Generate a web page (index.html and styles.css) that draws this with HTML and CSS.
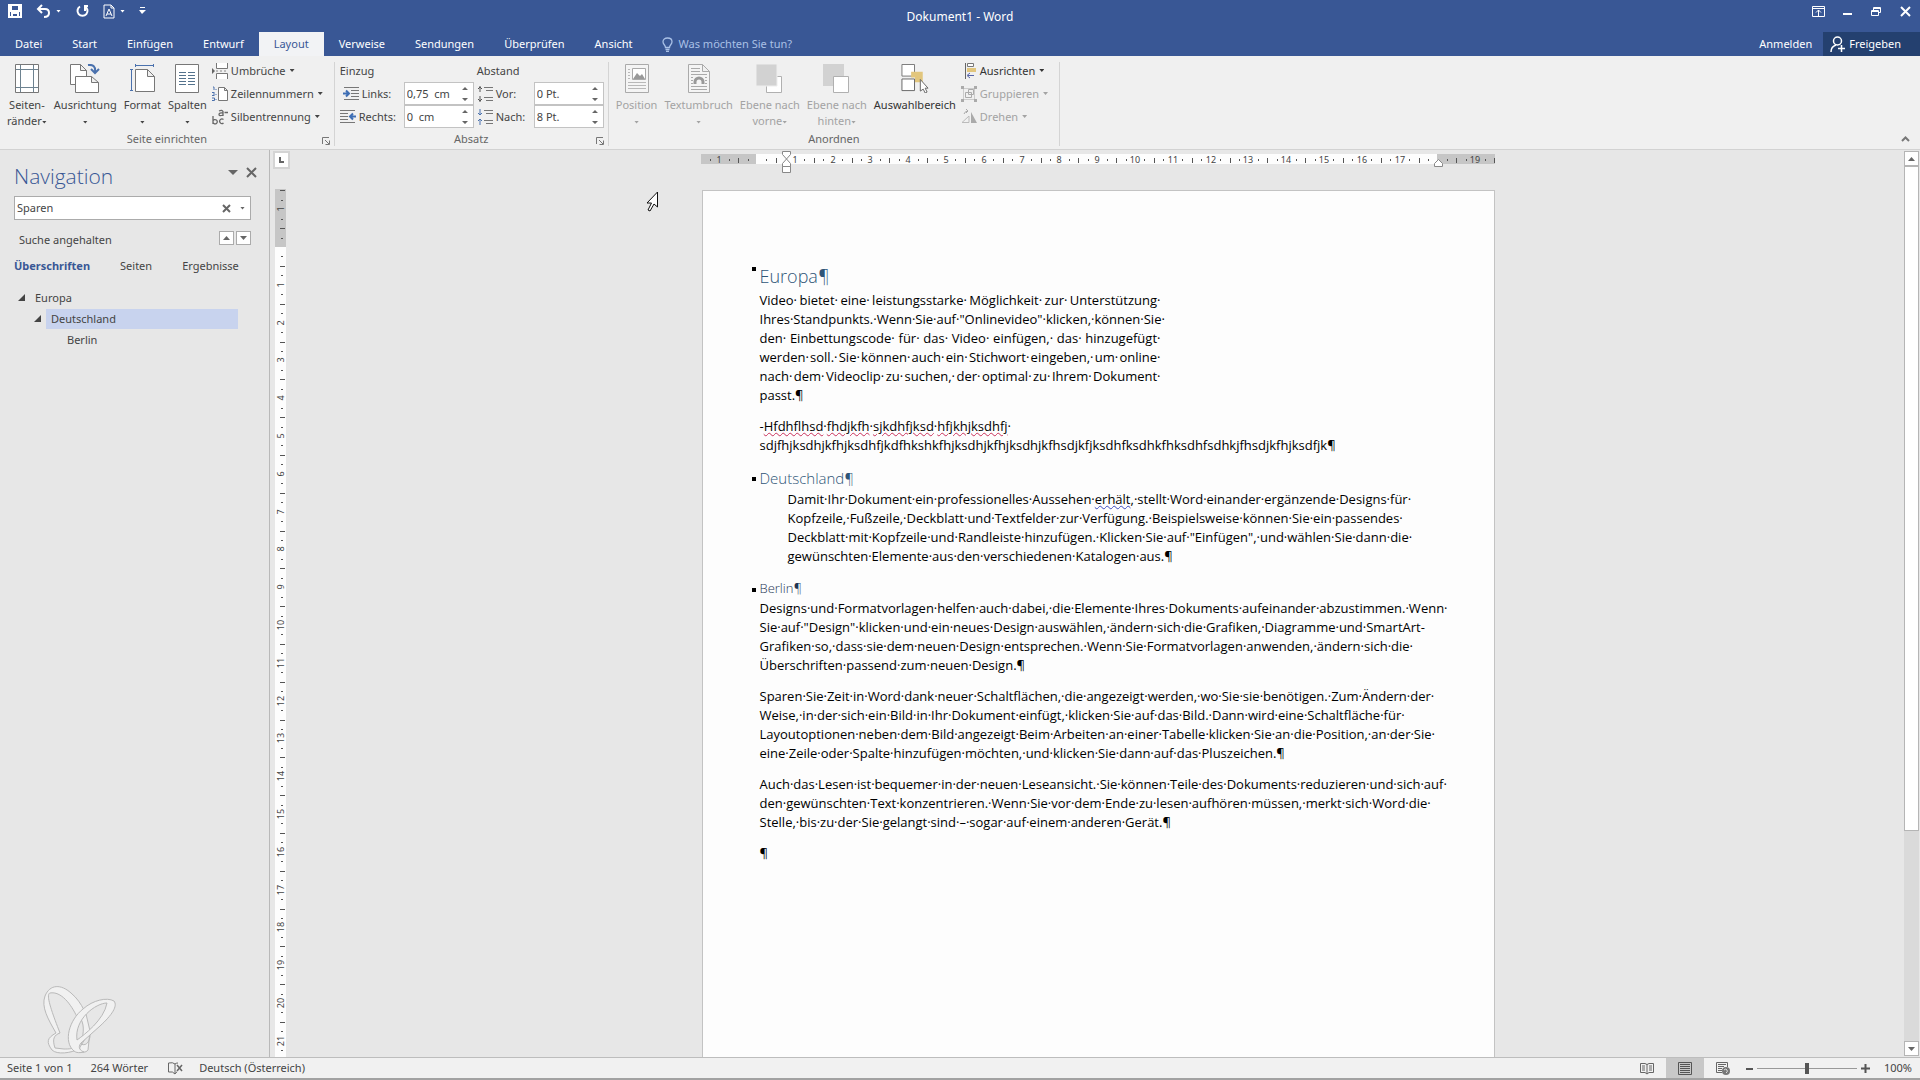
FILE: index.html
```html
<!DOCTYPE html>
<html lang="de">
<head>
<meta charset="utf-8">
<title>Dokument1 - Word</title>
<link rel="stylesheet" href="styles.css">
</head>
<body>
<header class="titlebar">
  <div class="title-row">
    <div class="quick">
      <button class="icon-btn" aria-label="Speichern"><svg width="14" height="14" viewBox="0 0 14 14"><path d="M1 1h12v12H1zM3 1v6h8V1M4 13V9h6v4" fill="none" stroke="#fff" stroke-width="2"/></svg></button>
      <button class="icon-btn undo" aria-label="Rückgängig"><svg width="15" height="14" viewBox="0 0 15 14"><path d="M6 1L2 5l4 4M2 5h7q4 0 4 4t-5 4" fill="none" stroke="#fff" stroke-width="2"/></svg><i class="caret"></i></button>
      <button class="icon-btn" aria-label="Wiederholen"><svg width="14" height="14" viewBox="0 0 14 14"><path d="M5 2.500a5 5 0 1 0 5 0M10 7V2" fill="none" stroke="#fff" stroke-width="2"/><path d="M9 1h4v2H9z" fill="#fff"/></svg></button>
      <button class="icon-btn doc" aria-label="Formatvorlage"><svg width="12" height="15" viewBox="0 0 12 15"><path d="M1 1h7l3 3v10H1zM8 1v3h3M3 12l3-7 3 7M4 10h4" fill="none" stroke="#fff"/></svg><i class="caret"></i></button>
      <button class="icon-btn" aria-label="Symbolleiste anpassen"><svg width="7" height="8" viewBox="0 0 7 8"><path d="M1 0h5v1H1zM0 3h7L3 7z" fill="#fff"/></svg></button>
    </div>
    <h1 class="doc-title">Dokument1 - Word</h1>
    <div class="window-btns">
      <button class="icon-btn" aria-label="Menüband-Anzeigeoptionen"><svg width="13" height="11" viewBox="0 0 13 11"><path d="M.5.5h12v10H.5zM1 2.500h11M6.500 10V4M4 6.500L6.500 4 9 6.500" fill="none" stroke="#fff"/></svg></button>
      <button class="icon-btn" aria-label="Minimieren"><svg width="10" height="11" viewBox="0 0 10 11"><path d="M0 7h9v2H0z" fill="#fff"/></svg></button>
      <button class="icon-btn" aria-label="Wiederherstellen"><svg width="11" height="11" viewBox="0 0 11 11"><path d="M.5 4.500h7v5h-7zM.5 5.500h7M2.500 4V1.500h7v5H8M2.500 2.500h7" fill="none" stroke="#fff"/></svg></button>
      <button class="icon-btn" aria-label="Schließen"><svg width="11" height="11" viewBox="0 0 11 11"><path d="M1 1l9 9M10 1l-9 9" stroke="#fff" stroke-width="2"/></svg></button>
    </div>
  </div>
  <nav class="tabs">
    <button class="tab file">Datei</button>
    <button class="tab">Start</button>
    <button class="tab">Einfügen</button>
    <button class="tab">Entwurf</button>
    <button class="tab active">Layout</button>
    <button class="tab">Verweise</button>
    <button class="tab">Sendungen</button>
    <button class="tab">Überprüfen</button>
    <button class="tab">Ansicht</button>
    <button class="tell"><svg width="11" height="15" viewBox="0 0 11 15"><path d="M3.500 10.500C3.500 8 1 7.500 1 4.800 1 2.500 3 1 5.500 1S10 2.500 10 4.800C10 7.500 7.500 8 7.500 10.500zM3.500 12.500h4M4 14.300h3" fill="none" stroke="#a9c0e6" stroke-width="1.300"/></svg>Was möchten Sie tun?</button>
    <button class="signin">Anmelden</button>
    <button class="share"><svg width="15" height="16" viewBox="0 0 15 16"><circle cx="7.500" cy="5" r="4" fill="none" stroke="#fff" stroke-width="1.500"/><path d="M1 16c0-4 2-6 5-7M11.500 9v7M8 12.500h7" fill="none" stroke="#fff" stroke-width="1.500"/></svg>Freigeben</button>
  </nav>
</header>

<section class="ribbon">
  <div class="group">
    <div class="tools">
      <button class="big"><svg width="24" height="29" viewBox="0 0 24 29"><path d="M.5.500h23v28H.5z" fill="#fff" stroke="#777"/><path d="M5.500 1v27M18.500 1v27M1 5.500h22M1 23.500h22" stroke="#6d8290"/></svg><span>Seiten-<br>ränder<i class="caret"></i></span></button>
      <button class="big"><svg width="30" height="29" viewBox="0 0 30 29"><path d="M.5.500h10l6 6v14H.5zM10.500.5v6h6" fill="#fff" stroke="#777"/><path d="M5.500 12.500h16l7 6v10h-23zM21.500 12.500v6h7" fill="#fff" stroke="#777"/><path d="M18 1q8-1 7 7M21 5l4 4 4-4" fill="none" stroke="#4a71ad" stroke-width="2"/></svg><span>Ausrichtung<br><i class="caret"></i></span></button>
      <button class="big"><svg width="25" height="29" viewBox="0 0 25 29"><path d="M5.500 5.500h12l7 7v15h-19zM17.500 5.500v7h7" fill="#fff" stroke="#777"/><path d="M5 1.500h19M5.500 0v3M23.500 0v3M1.500 5v22M0 5.500h3M0 26.500h3" stroke="#4a71ad"/></svg><span>Format<br><i class="caret"></i></span></button>
      <button class="big"><svg width="24" height="29" viewBox="0 0 24 29"><path d="M.5.500h23v28H.5z" fill="#fff" stroke="#777"/><path d="M4 8.500h7M4 11.500h7M4 14.500h7M4 17.500h7M4 20.500h7M13 8.500h7M13 11.500h7M13 14.500h7M13 17.500h7M13 20.500h7" stroke="#54728c"/></svg><span>Spalten<br><i class="caret"></i></span></button>
      <div class="stack">
        <button class="small"><svg width="16" height="16" viewBox="0 0 16 16"><path d="M4.500 0v5.500h11V0M4.500 16v-5.500h11V16" fill="#fff" stroke="#777"/><path d="M0 5l3 3-3 3z" fill="#666"/><path d="M4 8h2M8 8h2M12 8h2" stroke="#888"/></svg>Umbrüche<i class="caret"></i></button>
        <button class="small"><svg width="16" height="16" viewBox="0 0 16 16"><path d="M6.500 1.500h6l3 3v10h-9zM12.500 1.500v3h3" fill="#fff" stroke="#777"/><path d="M1 1h1v3M0 6.500h2.500M0 9.500h2.500M2 7v2M0 12h2.500v2.500H0M4 3v1M4 8v1M4 13v1" fill="none" stroke="#4a71ad"/></svg>Zeilennummern<i class="caret"></i></button>
        <button class="small"><svg width="16" height="16" viewBox="0 0 16 16" fill="none" stroke="#666" stroke-width="1.300"><path d="M1 7v8M1 12a2.200 2.200 0 1 1 0 1.500M11.500 10.500a2.300 2.300 0 1 0 0 3.500M7 2q3-1.500 4 .5V7M11 4q-4-.5-4 1.500T11 6M12.500 3.500H16"/></svg>Silbentrennung<i class="caret"></i></button>
      </div>
    </div>
    <div class="caption">Seite einrichten<button class="launch" aria-label="Seite einrichten"><svg width="8" height="8" viewBox="0 0 8 8"><path d="M.5 7V.500H7M3 3l4 4M7.500 3.500v4h-4" fill="none" stroke="#777"/></svg></button></div>
  </div>
  <div class="group">
    <div class="tools spacing">
      <span class="head">Einzug</span><span class="head">Abstand</span>
      <label class="field"><svg width="16" height="13" viewBox="0 0 16 13"><path d="M1 .5h15M8 3.500h8M8 6.500h8M8 9.500h8M1 12.500h15" stroke="#777"/><path d="M0 6.500h6M3 3.500l3 3-3 3" fill="none" stroke="#3f6fb5" stroke-width="2"/></svg><span>Links:</span><span class="spin"><input value="0,75  cm"><svg width="6" height="14" viewBox="0 0 6 14"><path d="M0 3l3-3 3 3zM0 11l3 3 3-3z" fill="#666"/></svg></span></label>
      <label class="field"><svg width="16" height="16" viewBox="0 0 16 16"><path d="M3 0v6M3 10v6M1 3l2-2 2 2M1 13l2 2 2-2" fill="none" stroke="#555"/><path d="M7 1.500h9M9 4.500h7M7 11.500h9M9 14.500h7" stroke="#777"/></svg><span>Vor:</span><span class="spin"><input value="0 Pt."><svg width="6" height="14" viewBox="0 0 6 14"><path d="M0 3l3-3 3 3zM0 11l3 3 3-3z" fill="#666"/></svg></span></label>
      <label class="field"><svg width="16" height="13" viewBox="0 0 16 13"><path d="M0 .5h15M0 3.500h8M0 6.500h8M0 9.500h8M0 12.500h15" stroke="#777"/><path d="M16 6.500h-6M13 3.500l-3 3 3 3" fill="none" stroke="#3f6fb5" stroke-width="2"/></svg><span>Rechts:</span><span class="spin"><input value="0  cm"><svg width="6" height="14" viewBox="0 0 6 14"><path d="M0 3l3-3 3 3zM0 11l3 3 3-3z" fill="#666"/></svg></span></label>
      <label class="field"><svg width="16" height="16" viewBox="0 0 16 16"><path d="M3 0v6M3 10v6M1 4l2 2 2-2M1 12l2-2 2 2" fill="none" stroke="#4a71ad"/><path d="M7 1.500h9M9 4.500h7M7 11.500h9M9 14.500h7" stroke="#777"/></svg><span>Nach:</span><span class="spin"><input value="8 Pt."><svg width="6" height="14" viewBox="0 0 6 14"><path d="M0 3l3-3 3 3zM0 11l3 3 3-3z" fill="#666"/></svg></span></label>
    </div>
    <div class="caption">Absatz<button class="launch" aria-label="Absatz"><svg width="8" height="8" viewBox="0 0 8 8"><path d="M.5 7V.500H7M3 3l4 4M7.500 3.500v4h-4" fill="none" stroke="#777"/></svg></button></div>
  </div>
  <div class="group">
    <div class="tools">
      <button class="big" disabled><svg width="24" height="29" viewBox="0 0 24 29"><path d="M.5.500h23v28H.5z" fill="#f4f4f4" stroke="#aaa"/><path d="M7.500 4.500h13v11h-13z" fill="#fff" stroke="#aaa"/><path d="M8 15l4-6 3 3 2-2 3 5z" fill="#999"/><path d="M3 5.500h2M3 8.500h2M3 11.500h2M3 14.500h2M3 18.500h18M3 21.500h18M3 24.500h18" stroke="#b8b8b8"/></svg><span>Position<br><i class="caret"></i></span></button>
      <button class="big" disabled><svg width="22" height="29" viewBox="0 0 22 29"><path d="M.5.500h14l7 7v21H.5zM14.500.5v7h7" fill="#f4f4f4" stroke="#aaa"/><path d="M3 4.500h9M3 7.500h9M3 10.500h16M3 13.500h2M17 13.500h2M3 16.500h2M17 16.500h2M3 19.500h2M17 19.500h2M3 22.500h16M3 25.500h16" stroke="#aaa"/><path d="M7 20v-2a4 4 0 0 1 8 0v2" fill="none" stroke="#999" stroke-width="3"/></svg><span>Textumbruch<br><i class="caret"></i></span></button>
      <button class="big" disabled><svg width="27" height="29" viewBox="0 0 27 29"><path d="M10.500 12.500h15v16h-15z" fill="#fff" stroke="#b0b0b0"/><path d="M0 0h21v22H0z" fill="#d2d2d2" stroke="#eee"/></svg><span>Ebene nach<br>vorne<i class="caret"></i></span></button>
      <button class="big" disabled><svg width="27" height="29" viewBox="0 0 27 29"><path d="M0 0h21v22H0z" fill="#d2d2d2"/><path d="M10.500 12.500h15v16h-15z" fill="#fff" stroke="#b0b0b0"/></svg><span>Ebene nach<br>hinten<i class="caret"></i></span></button>
      <button class="big strong"><svg width="28" height="30" viewBox="0 0 28 30"><path d="M.5.500h13v12H.5z" fill="#fff" stroke="#777"/><path d="M10 8h12v11h-8v-5h-4z" fill="#e2c67d"/><path d="M.5 15.500h13v12H.5z" fill="#fff" stroke="#666"/><path d="M19.500 16v12l3-2 2 4 2-1-2-4h3z" fill="#fff" stroke="#666"/></svg><span>Auswahlbereich</span></button>
      <div class="stack">
        <button class="small strong"><svg width="16" height="16" viewBox="0 0 16 16"><path d="M4.500 0v16" stroke="#666"/><path d="M6.500.500h6v3h-6z" fill="#fff" stroke="#777"/><path d="M6 5h9v4H6z" fill="#e2c67d"/><path d="M13 12.500H7M9 10l-3 2.500L9 15" fill="none" stroke="#5765a8"/></svg>Ausrichten<i class="caret"></i></button>
        <button class="small" disabled><svg width="16" height="16" viewBox="0 0 16 16"><path d="M2.500 2.500h11v11h-11z" fill="none" stroke="#ccc"/><path d="M0 0h3v3H0zM13 0h3v3h-3zM0 13h3v3H0zM13 13h3v3h-3z" fill="#aaa"/><path d="M4.500 6.500h6v5h-6zM7.500 3.500h5v5h-5z" fill="none" stroke="#aaa"/></svg>Gruppieren<i class="caret"></i></button>
        <button class="small" disabled><svg width="16" height="16" viewBox="0 0 16 16"><path d="M1 13.500h7V7z" fill="none" stroke="#bbb"/><path d="M10 3l6 11h-6z" fill="#aaa"/><path d="M3 5q1-3 4-3M5 0l2 2-2 2" fill="none" stroke="#aaa"/></svg>Drehen<i class="caret"></i></button>
      </div>
    </div>
    <div class="caption">Anordnen</div>
  </div>
  <button class="collapse" aria-label="Menüband reduzieren"><svg width="9" height="6" viewBox="0 0 9 6"><path d="M1 5l3.500-3.500L8 5" fill="none" stroke="#777" stroke-width="2"/></svg></button>
</section>

<main class="main">
  <aside class="nav">
    <div class="nav-head">
      <h2>Navigation</h2>
      <button class="icon-btn" aria-label="Optionen"><svg width="10" height="5" viewBox="0 0 10 5"><path d="M0 0h10L5 5z" fill="#666"/></svg></button>
      <button class="icon-btn" aria-label="Schließen"><svg width="11" height="11" viewBox="0 0 11 11"><path d="M1 1l9 9M10 1l-9 9" stroke="#666" stroke-width="2"/></svg></button>
    </div>
    <div class="search">
      <input aria-label="Dokument durchsuchen" value="Sparen">
      <button class="icon-btn" aria-label="Suche beenden"><svg width="9" height="9" viewBox="0 0 9 9"><path d="M1 1l7 7M8 1L1 8" stroke="#666" stroke-width="2"/></svg></button>
      <button class="icon-btn" aria-label="Suchoptionen"><i class="caret"></i></button>
    </div>
    <div class="result">
      <span>Suche angehalten</span>
      <button class="step" aria-label="Vorheriges"><svg width="7" height="4" viewBox="0 0 7 4"><path d="M0 4h7L3.500 0z" fill="#666"/></svg></button>
      <button class="step" aria-label="Nächstes"><svg width="7" height="4" viewBox="0 0 7 4"><path d="M0 0h7L3.500 4z" fill="#666"/></svg></button>
    </div>
    <div class="views">
      <button class="on">Überschriften</button><button>Seiten</button><button>Ergebnisse</button>
    </div>
    <ul class="tree">
      <li><svg width="7" height="7" viewBox="0 0 7 7"><path d="M7 0v7H0z" fill="#444"/></svg><a href="#europa">Europa</a></li>
      <li class="l2"><svg width="7" height="7" viewBox="0 0 7 7"><path d="M7 0v7H0z" fill="#444"/></svg><a href="#deutschland" class="sel">Deutschland</a></li>
      <li class="l3"><a href="#berlin">Berlin</a></li>
    </ul>
    <svg class="logo" width="78" height="70" viewBox="0 0 78 70"><g fill="#f1f1f1" stroke="#b9b9b9"><path d="M4 12C9 0 20 0 30 9c6 5 10 11 13 17l-7 7C30 20 20 7 9 9c-5 1 3 22 10 40-6 2-8 6-5 15l9 1c5 0 9 0 12-3l3 3c-8 4-22 6-27 1-6-8-5-12 4-17C7 35 0 23 4 12z"/><path d="M40 60c6 3 10-4 9-13l-4-17-5 5c4 8 2 16 0 25zM49 47l-2 19c-3 4-10 2-8-3z"/><path fill-rule="evenodd" d="M33 67C22 58 28 36 42 25c10-9 24-12 31-8 4 5-2 14-14 25L40 59c-4 5 0 8 3 9-4 1-8 1-10-1zM36 56c7-5 27-20 30-37-11 0-33 16-30 37z"/></g></svg>
  </aside>

  <section class="workspace">
    <div class="gutter">
      <button class="tabstop" aria-label="Tabstopp"><svg width="5" height="6" viewBox="0 0 5 6"><path d="M1 0v5h4" fill="none" stroke="#666" stroke-width="2"/></svg></button>
      <svg class="vruler" id="vruler" width="11" height="868"></svg>
    </div>
    <div class="canvas">
      <svg class="hruler" id="hruler" width="794" height="40"></svg>
      <article class="page">
        <h3 class="h-a" id="europa">Europa¶</h3>
        <p class="just">
          <span class="line"><span>Video·</span><span>bietet·</span><span>eine·</span><span>leistungsstarke·</span><span>Möglichkeit·</span><span>zur·</span><span>Unterstützung·</span></span>
          <span class="line"><span>Ihres·Standpunkts.·Wenn·Sie·auf·"Onlinevideo"·klicken,·können·Sie·</span></span>
          <span class="line"><span>den·</span><span>Einbettungscode·</span><span>für·</span><span>das·</span><span>Video·</span><span>einfügen,·</span><span>das·</span><span>hinzugefügt·</span></span>
          <span class="line"><span>werden·</span><span>soll.·</span><span>Sie·</span><span>können·</span><span>auch·</span><span>ein·</span><span>Stichwort·</span><span>eingeben,·</span><span>um·</span><span>online·</span></span>
          <span class="line"><span>nach·</span><span>dem·</span><span>Videoclip·</span><span>zu·</span><span>suchen,·</span><span>der·</span><span>optimal·</span><span>zu·</span><span>Ihrem·</span><span>Dokument·</span></span>
          <span class="line"><span>passt.¶</span></span>
        </p>
        <p>-<u class="bad">Hfdhflhsd</u>·<u class="bad">fhdjkfh</u>·<u class="bad">sjkdhfjksd</u>·<u class="bad">hfjkhjksdhfj</u>·<br>sdjfhjksdhjkfhjksdhfjkdfhkshkfhjksdhjkfhjksdhjkfhsdjkfjksdhfksdhkfhksdhfsdhkjfhsdjkfhjksdfjk¶</p>
        <h4 class="h-b" id="deutschland">Deutschland¶</h4>
        <p class="indent">Damit·Ihr·Dokument·ein·professionelles·Aussehen·<u class="gram">erhält</u>,·stellt·Word·einander·ergänzende·Designs·für·<br>Kopfzeile,·Fußzeile,·Deckblatt·und·Textfelder·zur·Verfügung.·Beispielsweise·können·Sie·ein·passendes·<br>Deckblatt·mit·Kopfzeile·und·Randleiste·hinzufügen.·Klicken·Sie·auf·"Einfügen",·und·wählen·Sie·dann·die·<br>gewünschten·Elemente·aus·den·verschiedenen·Katalogen·aus.¶</p>
        <h5 class="h-c" id="berlin">Berlin¶</h5>
        <p>Designs·und·Formatvorlagen·helfen·auch·dabei,·die·Elemente·Ihres·Dokuments·aufeinander·abzustimmen.·Wenn·<br>Sie·auf·"Design"·klicken·und·ein·neues·Design·auswählen,·ändern·sich·die·Grafiken,·Diagramme·und·SmartArt-<br>Grafiken·so,·dass·sie·dem·neuen·Design·entsprechen.·Wenn·Sie·Formatvorlagen·anwenden,·ändern·sich·die·<br>Überschriften·passend·zum·neuen·Design.¶</p>
        <p>Sparen·Sie·Zeit·in·Word·dank·neuer·Schaltflächen,·die·angezeigt·werden,·wo·Sie·sie·benötigen.·Zum·Ändern·der·<br>Weise,·in·der·sich·ein·Bild·in·Ihr·Dokument·einfügt,·klicken·Sie·auf·das·Bild.·Dann·wird·eine·Schaltfläche·für·<br>Layoutoptionen·neben·dem·Bild·angezeigt·Beim·Arbeiten·an·einer·Tabelle·klicken·Sie·an·die·Position,·an·der·Sie·<br>eine·Zeile·oder·Spalte·hinzufügen·möchten,·und·klicken·Sie·dann·auf·das·Pluszeichen.¶</p>
        <p>Auch·das·Lesen·ist·bequemer·in·der·neuen·Leseansicht.·Sie·können·Teile·des·Dokuments·reduzieren·und·sich·auf·<br>den·gewünschten·Text·konzentrieren.·Wenn·Sie·vor·dem·Ende·zu·lesen·aufhören·müssen,·merkt·sich·Word·die·<br>Stelle,·bis·zu·der·Sie·gelangt·sind·–·sogar·auf·einem·anderen·Gerät.¶</p>
        <p>¶</p>
      </article>
    </div>
    <div class="scroll">
      <button aria-label="Nach oben"><svg width="7" height="4" viewBox="0 0 7 4"><path d="M0 4h7L3.500 0z" fill="#666"/></svg></button>
      <div class="track"><div class="thumb"></div></div>
      <button aria-label="Nach unten"><svg width="7" height="4" viewBox="0 0 7 4"><path d="M0 0h7L3.500 4z" fill="#666"/></svg></button>
    </div>
    <svg class="pointer" width="13" height="21" viewBox="0 0 13 21"><path d="M11.500 1v15l-3.500-3-4 7-2-1 3.500-7H1z" fill="#fff" stroke="#111"/></svg>
  </section>
</main>

<footer class="status">
  <span class="pages">Seite 1 von 1</span>
  <span class="words">264 Wörter</span>
  <button class="icon-btn proof" aria-label="Rechtschreibung"><svg width="15" height="13" viewBox="0 0 15 13"><path d="M7 12V2Q5 0 .5 1v9Q5 9 7 12q1-2 2-2M7 2q1-1 3-1" fill="none" stroke="#666"/><path d="M9 3l5 6M14 3l-5 6" stroke="#666" stroke-width="1.500"/></svg></button>
  <span class="lang">Deutsch (Österreich)</span>
  <button class="view" aria-label="Lesemodus"><svg width="14" height="13" viewBox="0 0 14 13"><path d="M.5 1.500H5l2 1 2-1h4.500v9H9l-2 1.500-2-1.500H.5zM7 2v10M2 4h3M2 6h3M2 8h3M9 4h3M9 6h3M9 8h3" fill="none" stroke="#666"/></svg></button>
  <button class="view on" aria-label="Seitenlayout"><svg width="14" height="13" viewBox="0 0 14 13"><path d="M.5.500h13v12H.5zM2 2.500h10M2 4.500h10M2 6.500h10M2 8.500h10M2 10.500h10" fill="none" stroke="#555"/></svg></button>
  <button class="view" aria-label="Weblayout"><svg width="14" height="13" viewBox="0 0 14 13"><path d="M6 10.500H.5V.500h11V5M2 2.500h8M2 4.500h6M2 6.500h4M2 8.500h4" fill="none" stroke="#666"/><circle cx="10" cy="9" r="4" fill="#777"/><path d="M8 8q2-2 3 0t-1 3" stroke="#ddd" fill="none"/></svg></button>
  <button class="icon-btn" aria-label="Verkleinern"><svg width="7" height="9" viewBox="0 0 7 9"><path d="M0 4h7v2H0z" fill="#555"/></svg></button>
  <input class="zoom" type="range" min="0" max="100" value="50" aria-label="Zoom">
  <button class="icon-btn" aria-label="Vergrößern"><svg width="9" height="9" viewBox="0 0 9 9"><path d="M4.500 0v9M0 4.500h9" stroke="#555" stroke-width="2"/></svg></button>
  <span class="percent">100%</span>
</footer>
<script src="rulers.js"></script>
</body>
</html>
```
FILE: styles.css
```css
* { box-sizing: border-box; }
body {
  margin: 0;
  height: 100vh;
  display: flex;
  flex-direction: column;
  overflow: hidden;
  background: #e7e7e7;
  color: #444;
  font: 11px/16px "Noto Sans", "Open Sans", sans-serif;
}
h1, h2, h3, h4, h5, p, ul { margin: 0; padding: 0; font-weight: 400; }
button, input { font: inherit; color: inherit; background: none; border: 0; padding: 0; margin: 0; }
button { white-space: nowrap; }
svg { flex: none; display: block; }
.icon-btn { display: flex; align-items: center; }
.caret {
  display: inline-block;
  flex: none;
  width: 5px;
  height: 3px;
  margin-left: 4px;
  background: currentColor;
  clip-path: polygon(0 0, 100% 0, 50% 100%);
  vertical-align: middle;
}

/* title bar and tabs */
.titlebar { background: #395795; color: #fff; flex: none; }
.title-row { display: grid; grid-template-columns: 1fr auto 1fr; height: 32px; }
.quick { display: flex; align-items: center; height: 22px; padding-left: 8px; gap: 14px; }
.undo .caret, .doc .caret { margin-left: 5px; }
.doc-title { font-size: 12px; line-height: 34px; }
.window-btns { display: flex; justify-content: flex-end; align-items: center; gap: 18px; height: 22px; padding-right: 9px; }
.tabs { display: flex; height: 24px; }
.tab { padding: 0 15px; }
.tab.active { background: #f2f3f5; color: #395795; }
.tell { display: flex; align-items: center; gap: 6px; margin-left: 14px; color: #a9c0e6; }
.signin { margin-left: auto; padding: 0 11px; }
.share { display: flex; align-items: center; gap: 4px; background: #24406f; padding: 0 19px 0 7px; }

/* ribbon */
.ribbon { display: flex; flex: none; height: 94px; background: #f0f0f0; border-bottom: 1px solid #d2d2d2; padding: 6px 0 3px; }
.group { display: flex; flex-direction: column; border-right: 1px solid #d4d4d4; }
.tools { display: flex; gap: 3px; height: 71px; padding: 0 11px 0 5px; }
.caption { display: flex; justify-content: center; position: relative; line-height: 14px; color: #666; }
.launch { position: absolute; right: 4px; top: 5px; }
.big { display: flex; flex-direction: column; align-items: center; padding: 2px 2px 0; }
.big svg { height: 29px; }
.big span { margin-top: 4px; text-align: center; }
.big br + .caret { margin-left: 0; }
.strong { color: #333; }
:disabled { color: #a3a3a3; }
.stack { display: flex; flex-direction: column; }
.small { display: flex; align-items: center; gap: 3px; height: 23px; padding-bottom: 6px; }
.small .caret { margin-left: 1px; }
.spacing { display: grid; grid-template-columns: 134px 127px; grid-template-rows: 20px 23px 23px; gap: 0 3px; padding: 0 4px 0 5px; }
.head { line-height: 18px; }
.field { display: flex; align-items: center; gap: 3px; padding-left: 3px; }
.field + .field { padding-left: 0; }
.spin { display: flex; align-items: center; width: 70px; height: 23px; margin-left: auto; padding: 0 5px 0 2px; background: #fff; border: 1px solid #c3c3c3; }
.spin input { width: 0; flex: 1; white-space: pre; }
.collapse { margin: auto 10px 4px auto; }

/* navigation pane */
.main { flex: 1; min-height: 0; display: flex; }
.nav { width: 270px; flex: none; display: flex; flex-direction: column; border-right: 1px solid #b9b9b9; padding: 10px 18px 3px 14px; }
.nav-head { display: flex; gap: 8px; height: 36px; margin-right: -6px; }
.nav-head h2 { flex: 1; font: 300 21px/32px "Open Sans", sans-serif; color: #395795; }
.nav-head .icon-btn { height: 24px; }
.search { display: flex; align-items: center; height: 24px; background: #fff; border: 1px solid #ababab; padding: 0 5px 0 2px; }
.search input { flex: 1; min-width: 0; }
.search .caret { margin-left: 9px; color: #666; }
.result { display: flex; align-items: center; gap: 2px; padding-left: 5px; margin-top: 11px; height: 18px; }
.result span { flex: 1; }
.step { width: 15px; height: 14px; display: grid; place-items: center; background: #fff; border: 1px solid #ababab; margin-bottom: 4px; }
.views { display: flex; gap: 30px; margin-top: 9px; }
.views .on { font-weight: 700; color: #395795; }
.tree { list-style: none; margin: 13px 13px 0 4px; }
.tree li { display: flex; align-items: center; gap: 5px; height: 21px; }
.tree .l2 { padding-left: 16px; }
.tree .l3 { padding-left: 44px; }
.tree a { flex: 1; color: inherit; text-decoration: none; line-height: 20px; padding-left: 5px; }
.tree .sel { background: #c8d3ee; }
.logo { margin: auto 0 0 27px; }

/* document area */
.workspace { flex: 1; min-width: 0; display: flex; position: relative; }
.gutter { width: 22px; flex: none; padding-left: 3px; }
.tabstop { display: grid; place-items: center; width: 17px; height: 18px; margin-top: 1px; background: #fff; border: 2px solid #d4d4d4; }
.vruler { margin: 20px 0 0 2px; overflow: visible; }
.canvas { flex: 1; overflow: hidden; display: flex; flex-direction: column; align-items: center; }
.vruler text, .hruler text { font: 9px "Noto Sans", sans-serif; fill: #444; text-anchor: middle; }
.page {
  flex: none;
  width: 793px;
  min-height: 1122px;
  padding: 71px 56px 71px 57px;
  background: #fdfdfd;
  border: 1px solid #c3c3c3;
  color: #000;
  font: 13px/19px "Open Sans", Lato, sans-serif;
  white-space: nowrap;
}
.page p { margin-bottom: 12px; }
.page .indent { margin-left: 28px; }
.just { width: 401px; }
.line { display: flex; justify-content: space-between; }
.h-a, .h-b, .h-c { position: relative; font-weight: 300; color: #2f5577; }
.h-a { font-size: 18px; line-height: 29px; }
.h-b { font-size: 15px; line-height: 23px; }
.h-c { font-size: 13px; line-height: 21px; color: #1f3654; }
.h-a::before, .h-b::before, .h-c::before { content: ""; position: absolute; left: -8px; top: 10px; width: 4px; height: 4px; background: #000; }
.h-a::before { top: 5px; }
.bad { text-decoration: underline wavy #c8305a 1px; }
.gram { text-decoration: underline wavy #3b4ac0 1px; }
.scroll { width: 16px; flex: none; display: flex; flex-direction: column; padding: 1px 1px 1px 0; }
.scroll button { height: 15px; flex: none; display: grid; place-items: center; background: #fff; border: 1px solid #b5b5b5; }
.track { flex: 1; background: #dadada; }
.thumb { height: 76%; background: #fff; border: 1px solid #b5b5b5; }
.pointer { position: absolute; left: 376px; top: 41px; }

/* status bar */
.status { display: flex; align-items: center; flex: none; height: 23px; background: #f1f1f1; border-top: 1px solid #bdbdbd; border-bottom: 2px solid #a2a2a2; padding: 0 8px 0 7px; }
.words { margin-left: 18px; }
.proof { margin: 0 16px 0 20px; }
.lang { margin-right: auto; }
.view { width: 38px; align-self: stretch; display: grid; place-items: center; }
.view.on { background: #c8c8c8; }
.view + .icon-btn { margin-left: 4px; }
.zoom { appearance: none; width: 100px; height: 12px; margin: 0 4px; background: linear-gradient(#999, #999) center / 100% 1px no-repeat; }
.zoom::-webkit-slider-thumb { appearance: none; width: 4px; height: 11px; background: #555; }
.percent { margin-left: 14px; }
```
FILE: rulers.js
```javascript
// Draws the centimetre scale of both rulers (37.8 px per centimetre at 100 %).
const CM = 37.8;
const NS = "http://www.w3.org/2000/svg";

function add(svg, name, attrs, text) {
  const el = document.createElementNS(NS, name);
  for (const key in attrs) el.setAttribute(key, attrs[key]);
  if (text !== undefined) el.textContent = text;
  svg.append(el);
}

function scale(svg, origin, length, hidden, place) {
  for (let q = -6; origin + q * CM / 4 < length; q++) {
    const pos = Math.round(origin + q * CM / 4);
    if (pos < 0 || q === 0) continue;
    if (q % 4 === 0) {
      const n = Math.abs(q / 4);
      if (!hidden.includes(n)) place("text", pos, n);
    } else {
      place("tick", pos, q % 2 === 0 ? 5 : 2);
    }
  }
}

const h = document.getElementById("hruler");
add(h, "rect", { x: 0, y: 4, width: 794, height: 10, fill: "#fdfdfd" });
add(h, "rect", { x: 0, y: 4, width: 55, height: 10, fill: "#c6c6c6" });
add(h, "rect", { x: 736, y: 4, width: 58, height: 10, fill: "#c6c6c6" });
scale(h, 56, 794, [18], (kind, pos, v) => {
  if (kind === "text") add(h, "text", { x: pos, y: 13 }, v);
  else if (Math.abs(pos - 85) > 4) add(h, "rect", { x: pos, y: v === 5 ? 8 : 9, width: 1, height: v, fill: "#555" });
});
add(h, "path", { d: "M81.500 1.500h8v3l-8 9v3h8v-3l-8-9zM81.500 16.500h8v6h-8z", fill: "#fff", stroke: "#888" });
add(h, "path", { d: "M733.500 16.500v-3l4-4 4 4v3z", fill: "#fff", stroke: "#888" });

const v = document.getElementById("vruler");
add(v, "rect", { x: 0, y: 0, width: 11, height: 868, fill: "#fdfdfd" });
add(v, "rect", { x: 0, y: 0, width: 11, height: 58, fill: "#c6c6c6" });
scale(v, 58, 868, [], (kind, pos, n) => {
  if (kind === "text") add(v, "text", { transform: `translate(9 ${pos}) rotate(-90)` }, n);
  else add(v, "rect", { x: n === 5 ? 5 : 6, y: pos, width: n, height: 1, fill: "#555" });
});
```
